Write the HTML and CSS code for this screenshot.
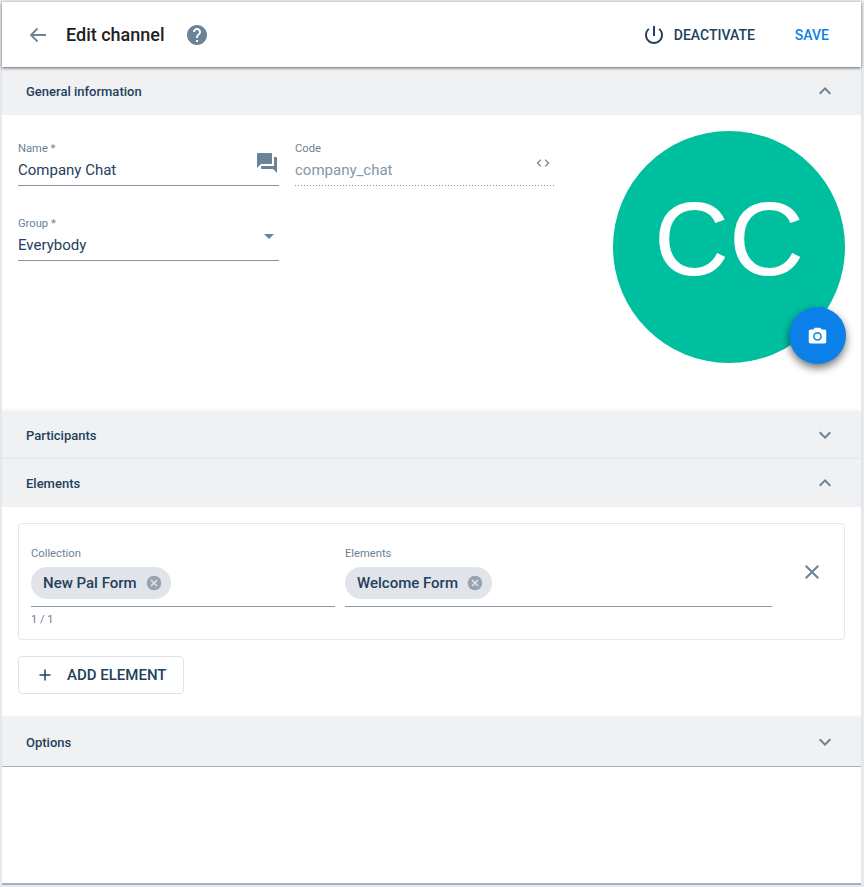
FILE: index.html
```html
<!DOCTYPE html>
<html>
<head>
  <meta charset="UTF-8">
  <title>Edit channel</title>
  <link rel="stylesheet" href="styles.css">
</head>
<body>
<div class="page">
  <header class="topbar">
    <svg class="back" width="24" height="24" viewBox="0 0 24 24"><path d="M20 12H5M11.5 5.5L5 12l6.5 6.5" fill="none" stroke="#6b8297" stroke-width="1.8"/></svg>
    <h1>Edit channel</h1>
    <svg class="help" width="24" height="24" viewBox="0 0 24 24"><path fill="#6b8297" d="M12 2C6.48 2 2 6.48 2 12s4.48 10 10 10 10-4.48 10-10S17.52 2 12 2zm1 17h-2v-2h2v2zm2.07-7.75l-.9.92C13.45 12.9 13 13.5 13 15h-2v-.5c0-1.1.45-2.1 1.17-2.83l1.24-1.26c.37-.36.59-.86.59-1.41 0-1.1-.9-2-2-2s-2 .9-2 2H8c0-2.21 1.79-4 4-4s4 1.79 4 4c0 .88-.36 1.68-.93 2.25z"/></svg>
    <div class="spacer"></div>
    <button class="bar-btn deactivate">
      <svg width="24" height="24" viewBox="0 0 24 24"><path fill="#23415c" d="M13 3h-2v10h2V3zm4.83 2.17l-1.42 1.42C17.99 7.86 19 9.81 19 12c0 3.87-3.13 7-7 7s-7-3.13-7-7c0-2.19 1.01-4.14 2.58-5.42L6.17 5.17C4.23 6.82 3 9.26 3 12c0 4.97 4.03 9 9 9s9-4.03 9-9c0-2.74-1.23-5.18-3.17-6.83z"/></svg>
      DEACTIVATE
    </button>
    <button class="bar-btn save">SAVE</button>
  </header>

  <div class="section-head first">
    <span>General information</span>
    <svg class="chev" width="24" height="24" viewBox="0 0 24 24"><path fill="#6b8297" d="M7.41 15.41L12 10.83l4.59 4.58L18 14l-6-6-6 6z"/></svg>
  </div>
  <section class="general">
    <div class="general-fields">
      <div class="row">
        <div class="field">
          <label>Name *</label>
          <div class="value">Company Chat</div>
          <svg class="field-icon" width="24" height="24" viewBox="0 0 24 24"><path fill="#6b8297" d="M21 6h-2v9H6v2c0 .55.45 1 1 1h11l4 4V7c0-.55-.45-1-1-1zm-4 6V3c0-.55-.45-1-1-1H3c-.55 0-1 .45-1 1v14l4-4h10c.55 0 1-.45 1-1z"/></svg>
        </div>
        <div class="field readonly">
          <label>Code</label>
          <div class="value">company_chat</div>
          <svg class="field-icon code" width="24" height="24" viewBox="0 0 24 24"><path d="M9.5 8L5.5 12l4 4M14.5 8l4 4-4 4" fill="none" stroke="#6b8297" stroke-width="1.5"/></svg>
        </div>
      </div>
      <div class="row">
        <div class="field">
          <label>Group *</label>
          <div class="value">Everybody</div>
          <span class="caret"></span>
        </div>
      </div>
    </div>
    <div class="avatar">
      CC
      <button class="fab">
        <svg width="24" height="24" viewBox="0 0 24 24"><circle cx="12" cy="13" r="3.2" fill="#fff"/><path fill="#fff" d="M9 3L7.17 5H4c-1.1 0-2 .9-2 2v12c0 1.1.9 2 2 2h16c1.1 0 2-.9 2-2V7c0-1.1-.9-2-2-2h-3.17L15 3H9zm3 15c-2.76 0-5-2.24-5-5s2.24-5 5-5 5 2.24 5 5-2.24 5-5 5z"/></svg>
      </button>
    </div>
  </section>

  <div class="section-head">
    <span>Participants</span>
    <svg class="chev" width="24" height="24" viewBox="0 0 24 24"><path fill="#6b8297" d="M7.41 8.59L12 13.17l4.59-4.58L18 10l-6 6-6-6z"/></svg>
  </div>
  <div class="section-head">
    <span>Elements</span>
    <svg class="chev" width="24" height="24" viewBox="0 0 24 24"><path fill="#6b8297" d="M7.41 15.41L12 10.83l4.59 4.58L18 14l-6-6-6 6z"/></svg>
  </div>
  <section class="elements">
    <div class="element-box">
      <div class="chip-field collection">
        <label>Collection</label>
        <div class="chip-line">
          <span class="chip">New Pal Form
            <svg width="18" height="18" viewBox="0 0 18 18"><circle cx="9" cy="9" r="7.3" fill="#97a4b0"/><path d="M6 6l6 6M12 6l-6 6" stroke="#e1e5ea" stroke-width="1.6"/></svg>
          </span>
        </div>
        <div class="counter">1 / 1</div>
      </div>
      <div class="chip-field targets">
        <label>Elements</label>
        <div class="chip-line">
          <span class="chip">Welcome Form
            <svg width="18" height="18" viewBox="0 0 18 18"><circle cx="9" cy="9" r="7.3" fill="#97a4b0"/><path d="M6 6l6 6M12 6l-6 6" stroke="#e1e5ea" stroke-width="1.6"/></svg>
          </span>
        </div>
      </div>
      <svg class="remove" width="24" height="24" viewBox="0 0 24 24"><path fill="#6b8297" d="M19 6.41L17.59 5 12 10.59 6.41 5 5 6.41 10.59 12 5 17.59 6.41 19 12 13.41 17.59 19 19 17.59 13.41 12z"/></svg>
    </div>
    <button class="add-btn">
      <svg width="14" height="14" viewBox="0 0 14 14"><path d="M7 1.5v11M1.5 7h11" stroke="#23415c" stroke-width="1.5"/></svg>
      ADD ELEMENT
    </button>
  </section>

  <div class="section-head last">
    <span>Options</span>
    <svg class="chev" width="24" height="24" viewBox="0 0 24 24"><path fill="#6b8297" d="M7.41 8.59L12 13.17l4.59-4.58L18 10l-6 6-6-6z"/></svg>
  </div>
  <div class="filler"></div>
</div>
</body>
</html>
```

FILE: styles.css
```css
* {
  box-sizing: border-box;
}
html, body {
  margin: 0;
  height: 100%;
}
body {
  background-color: #e6eaef;
  font-family: Roboto, "Liberation Sans", sans-serif;
  color: #23415c;
  padding: 2px 3px 2px 2px;
}
button {
  font-family: inherit;
  background: none;
  border: none;
  padding: 0;
}
label {
  display: block;
  font-size: 11.2px;
  line-height: 14px;
  color: #6b8297;
}

.page {
  background-color: #fff;
  height: 883px;
  border-bottom: 2px solid #9fb3c6;
  display: flex;
  flex-direction: column;
}

/* top bar */
.topbar {
  height: 65px;
  flex: none;
  display: flex;
  align-items: center;
  padding: 0 32px 0 24px;
  background-color: #fff;
  box-shadow: 0 1px 3px rgba(0, 0, 0, 0.6);
  position: relative;
  z-index: 2;
}
.topbar h1 {
  margin: 0 0 0 16px;
  font-size: 18px;
  font-weight: 500;
  color: #212121;
}
.help {
  margin-left: 20px;
}
.spacer {
  flex: 1;
}
.bar-btn {
  font-size: 14px;
  font-weight: 500;
  display: flex;
  align-items: center;
}
.deactivate {
  color: #23415c;
  gap: 8px;
  margin-right: 40px;
}
.save {
  color: #0a80e8;
}

/* accordion heads */
.section-head {
  height: 48px;
  flex: none;
  background-color: #eff1f3;
  display: flex;
  align-items: center;
  justify-content: space-between;
  padding: 0 24px;
  font-size: 13px;
  font-weight: 500;
  color: #23415c;
  box-shadow: 0 -1px 2px rgba(60, 80, 100, 0.08);
}
.section-head.last {
  height: 50px;
  padding-top: 1px;
  border-bottom: 1px solid #9fb3c6;
}

/* general information */
.general {
  height: 296px;
  flex: none;
  padding: 16px 16px 0;
  display: flex;
  justify-content: space-between;
}
.general-fields {
  padding-top: 10px;
}
.row {
  display: flex;
  gap: 16px;
  margin-bottom: 30px;
}
.field {
  width: 261px;
  height: 45px;
  position: relative;
  border-bottom: 1px solid #8397a8;
}
.field label {
  padding-top: 1px;
  margin-bottom: 4px;
}
.value {
  font-size: 15px;
  line-height: 20px;
}
.readonly {
  border-bottom: none;
  background: repeating-linear-gradient(to right, #8397a8 0, #8397a8 1px, transparent 1px, transparent 3px) left bottom / 100% 1px no-repeat;
}
.readonly .value {
  color: #8397a8;
}
.field-icon {
  position: absolute;
  right: 0;
  top: 10px;
}
.field-icon.code {
  right: 1px;
  top: 10px;
  transform: scale(0.85);
}
.caret {
  position: absolute;
  right: 5px;
  top: 18px;
  border-left: 5px solid transparent;
  border-right: 5px solid transparent;
  border-top: 5px solid #6b8297;
}
.avatar {
  width: 232px;
  height: 232px;
  border-radius: 50%;
  background-color: #00bf9f;
  color: #fff;
  font-family: "Liberation Sans", sans-serif;
  font-size: 104px;
  line-height: 216px;
  text-align: center;
  position: relative;
}
.fab {
  position: absolute;
  right: -1px;
  bottom: -1px;
  width: 57px;
  height: 57px;
  border-radius: 50%;
  background-color: #0a80e8;
  box-shadow: 0 4px 9px rgba(0, 0, 0, 0.55);
  display: flex;
  align-items: center;
  justify-content: center;
}
.fab svg {
  width: 21px;
  height: 21px;
}

/* elements */
.elements {
  height: 210px;
  flex: none;
  padding: 16px 16px 0;
}
.element-box {
  height: 117px;
  border: 1px solid #e4e7eb;
  border-radius: 4px;
  padding: 23px 0 0 12px;
  display: flex;
  position: relative;
}
.chip-field.collection {
  width: 304px;
  margin-right: 10px;
}
.chip-field.targets {
  width: 427px;
}
.chip-line {
  height: 46px;
  padding-top: 6px;
  border-bottom: 1px solid #8b9aa6;
}
.chip {
  display: inline-flex;
  align-items: center;
  height: 32px;
  padding: 0 8px 0 12px;
  gap: 8px;
  border-radius: 16px;
  background-color: #e1e5ea;
  font-size: 15px;
  font-weight: 500;
  color: #23415c;
  white-space: nowrap;
}
.counter {
  font-size: 11px;
  color: #6b8297;
  margin-top: 6px;
}
.remove {
  position: absolute;
  right: 20px;
  top: 36px;
}
.add-btn {
  display: flex;
  align-items: center;
  gap: 15px;
  margin-top: 16px;
  width: 166px;
  height: 38px;
  padding-left: 19px;
  border: 1px solid #dfe3e8;
  border-radius: 4px;
  font-size: 15px;
  font-weight: 500;
  color: #23415c;
}
.filler {
  flex: 1;
}
```
